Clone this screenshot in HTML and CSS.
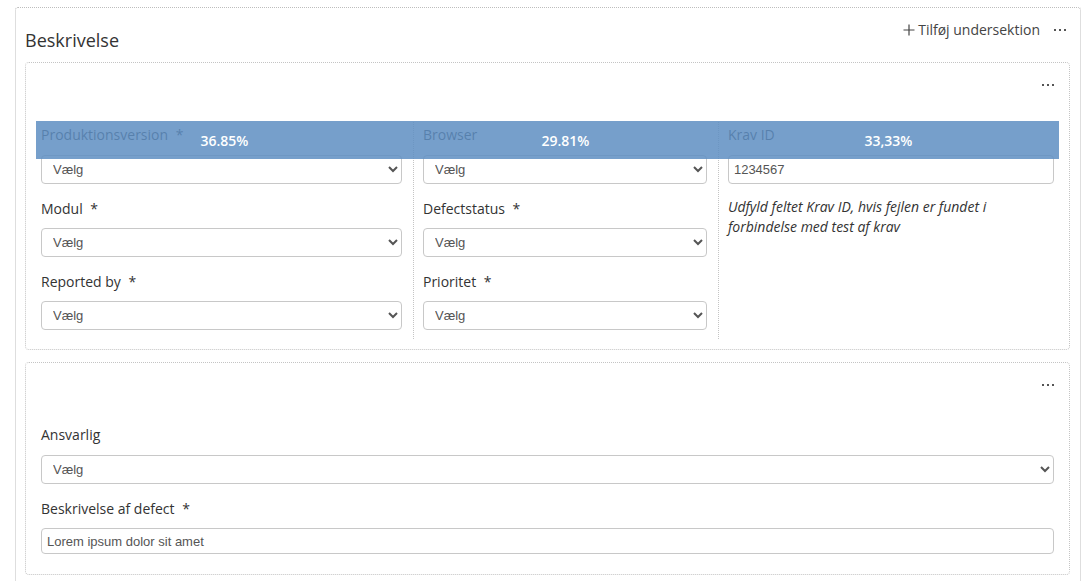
FILE: index.html
```html
<!DOCTYPE html>
<html lang="da">
<head>
<meta charset="utf-8">
<title>Beskrivelse</title>
<link rel="stylesheet" href="styles.css">
</head>
<body>
<div class="section">
  <div class="section-head">
    <h2 class="section-title">Beskrivelse</h2>
    <div class="section-actions">
      <span class="add-sub">
        <svg class="plus" width="12" height="12" viewBox="0 0 12 12"><path d="M6 0.5v11M0.5 6h11" stroke="#444" stroke-width="1.2" fill="none"/></svg>
        Tilføj undersektion
      </span>
      <svg class="dots" width="12" height="4" viewBox="0 0 12 4"><rect x="0" y="1" width="2" height="2" fill="#555"/><rect x="5" y="1" width="2" height="2" fill="#555"/><rect x="10" y="1" width="2" height="2" fill="#555"/></svg>
    </div>
  </div>

  <div class="sub">
    <div class="sub-head">
      <svg class="dots" width="12" height="4" viewBox="0 0 12 4"><rect x="0" y="1" width="2" height="2" fill="#555"/><rect x="5" y="1" width="2" height="2" fill="#555"/><rect x="10" y="1" width="2" height="2" fill="#555"/></svg>
    </div>
    <div class="cols">
      <div class="col col1">
        <div class="field first">
          <label class="lbl">Produktionsversion <span class="req">*</span></label>
          <select class="sel"><option>Vælg</option></select>
        </div>
        <div class="field">
          <label class="lbl">Modul <span class="req">*</span></label>
          <select class="sel"><option>Vælg</option></select>
        </div>
        <div class="field">
          <label class="lbl">Reported by <span class="req">*</span></label>
          <select class="sel"><option>Vælg</option></select>
        </div>
      </div>
      <div class="col col2">
        <div class="field first">
          <label class="lbl">Browser</label>
          <select class="sel"><option>Vælg</option></select>
        </div>
        <div class="field">
          <label class="lbl">Defectstatus <span class="req">*</span></label>
          <select class="sel"><option>Vælg</option></select>
        </div>
        <div class="field">
          <label class="lbl">Prioritet <span class="req">*</span></label>
          <select class="sel"><option>Vælg</option></select>
        </div>
      </div>
      <div class="col col3">
        <div class="field first">
          <label class="lbl">Krav ID</label>
          <input class="inp" type="text" value="1234567">
        </div>
        <p class="help">Udfyld feltet Krav ID, hvis fejlen er fundet i forbindelse med test af krav</p>
      </div>
      <div class="overlay">
        <div class="seg" style="width:36.85%">36.85%</div>
        <div class="seg" style="width:29.81%">29.81%</div>
        <div class="seg" style="width:33.34%">33,33%</div>
      </div>
    </div>
  </div>

  <div class="sub">
    <div class="sub-head">
      <svg class="dots" width="12" height="4" viewBox="0 0 12 4"><rect x="0" y="1" width="2" height="2" fill="#555"/><rect x="5" y="1" width="2" height="2" fill="#555"/><rect x="10" y="1" width="2" height="2" fill="#555"/></svg>
    </div>
    <div class="full">
      <div class="field first">
        <label class="lbl">Ansvarlig</label>
        <select class="sel"><option>Vælg</option></select>
      </div>
      <div class="field">
        <label class="lbl">Beskrivelse af defect <span class="req">*</span></label>
        <input class="inp short" type="text" value="Lorem ipsum dolor sit amet">
      </div>
    </div>
  </div>
</div>
</body>
</html>
```

FILE: styles.css
```css
html, body {
  margin: 0;
  padding: 0;
  background: #fff;
}
body {
  font-family: "Open Sans", "Liberation Sans", sans-serif;
  color: #333;
  padding: 7px 9px 0 15px;
}
.section {
  border: 1px dotted #bdbdbd;
  border-bottom: none;
  border-radius: 3px 3px 0 0;
  padding: 0 10px 0 9px;
  min-height: 600px;
}
.section-head {
  display: flex;
  justify-content: space-between;
  align-items: flex-start;
  padding-top: 12px;
  margin-bottom: 10px;
}
.section-title {
  margin: 8px 0 0 0;
  font-size: 18px;
  line-height: 24px;
  font-weight: 400;
  color: #333;
}
.section-actions {
  display: flex;
  align-items: center;
  gap: 14px;
  font-size: 14px;
  line-height: 20px;
  color: #444;
  padding-right: 4px;
}
.add-sub {
  display: flex;
  align-items: center;
  gap: 3px;
}
.plus {
  display: block;
}
.dots {
  display: block;
}
.sub {
  border: 1px dotted #c4c4c4;
  border-radius: 4px;
  padding: 0 10px 10px 10px;
  margin-bottom: 12px;
}
.sub-head {
  height: 59px;
  display: flex;
  justify-content: flex-end;
  align-items: flex-start;
  padding-right: 5px;
}
.sub-head .dots {
  margin-top: 20px;
}
.cols {
  position: relative;
  display: flex;
}
.col {
  box-sizing: border-box;
  padding-top: 3px;
  padding-bottom: 9px;
}
.col1 {
  width: 36.85%;
  padding-left: 5px;
  padding-right: 11px;
}
.col2 {
  width: 29.81%;
  padding-left: 9px;
  padding-right: 11px;
  border-left: 1px dotted #c4c4c4;
}
.col3 {
  width: 33.34%;
  padding-left: 9px;
  padding-right: 5px;
  border-left: 1px dotted #c4c4c4;
}
.field {
  display: flex;
  flex-direction: column;
  margin-top: 15px;
}
.field.first {
  margin-top: 0;
}
.lbl {
  font-size: 14px;
  line-height: 20px;
  color: #333;
  margin-bottom: 9px;
}
.field.first .lbl {
  margin-bottom: 10px;
}
.req {
  margin-left: 4px;
}
.sel {
  box-sizing: border-box;
  width: 100%;
  height: 29px;
  border: 1px solid #c8c8c8;
  border-radius: 4px;
  background: #fff;
  font-family: "Liberation Sans", Arial, sans-serif;
  font-size: 13px;
  color: #555;
  padding: 0 7px;
  margin: 0;
}
.inp {
  box-sizing: border-box;
  width: 100%;
  height: 29px;
  border: 1px solid #c8c8c8;
  border-radius: 4px;
  background: #fff;
  font-family: "Liberation Sans", Arial, sans-serif;
  font-size: 13px;
  color: #555;
  padding: 0 5px;
  margin: 0;
  outline: none;
}
.inp.short {
  height: 26px;
  padding: 0 5px;
}
.help {
  margin: 13px 0 0 0;
  font-size: 14px;
  line-height: 20px;
  font-style: italic;
  color: #333;
}
.full {
  padding: 3px 5px 10px 5px;
}
.overlay {
  position: absolute;
  left: 0;
  right: 0;
  top: -1px;
  height: 38px;
  display: flex;
  background: rgba(94, 142, 194, 0.85);
  pointer-events: none;
}
.seg {
  display: flex;
  align-items: center;
  justify-content: center;
  color: #fff;
  font-size: 14px;
  font-weight: 600;
  padding-top: 1px;
  box-sizing: border-box;
}
```
